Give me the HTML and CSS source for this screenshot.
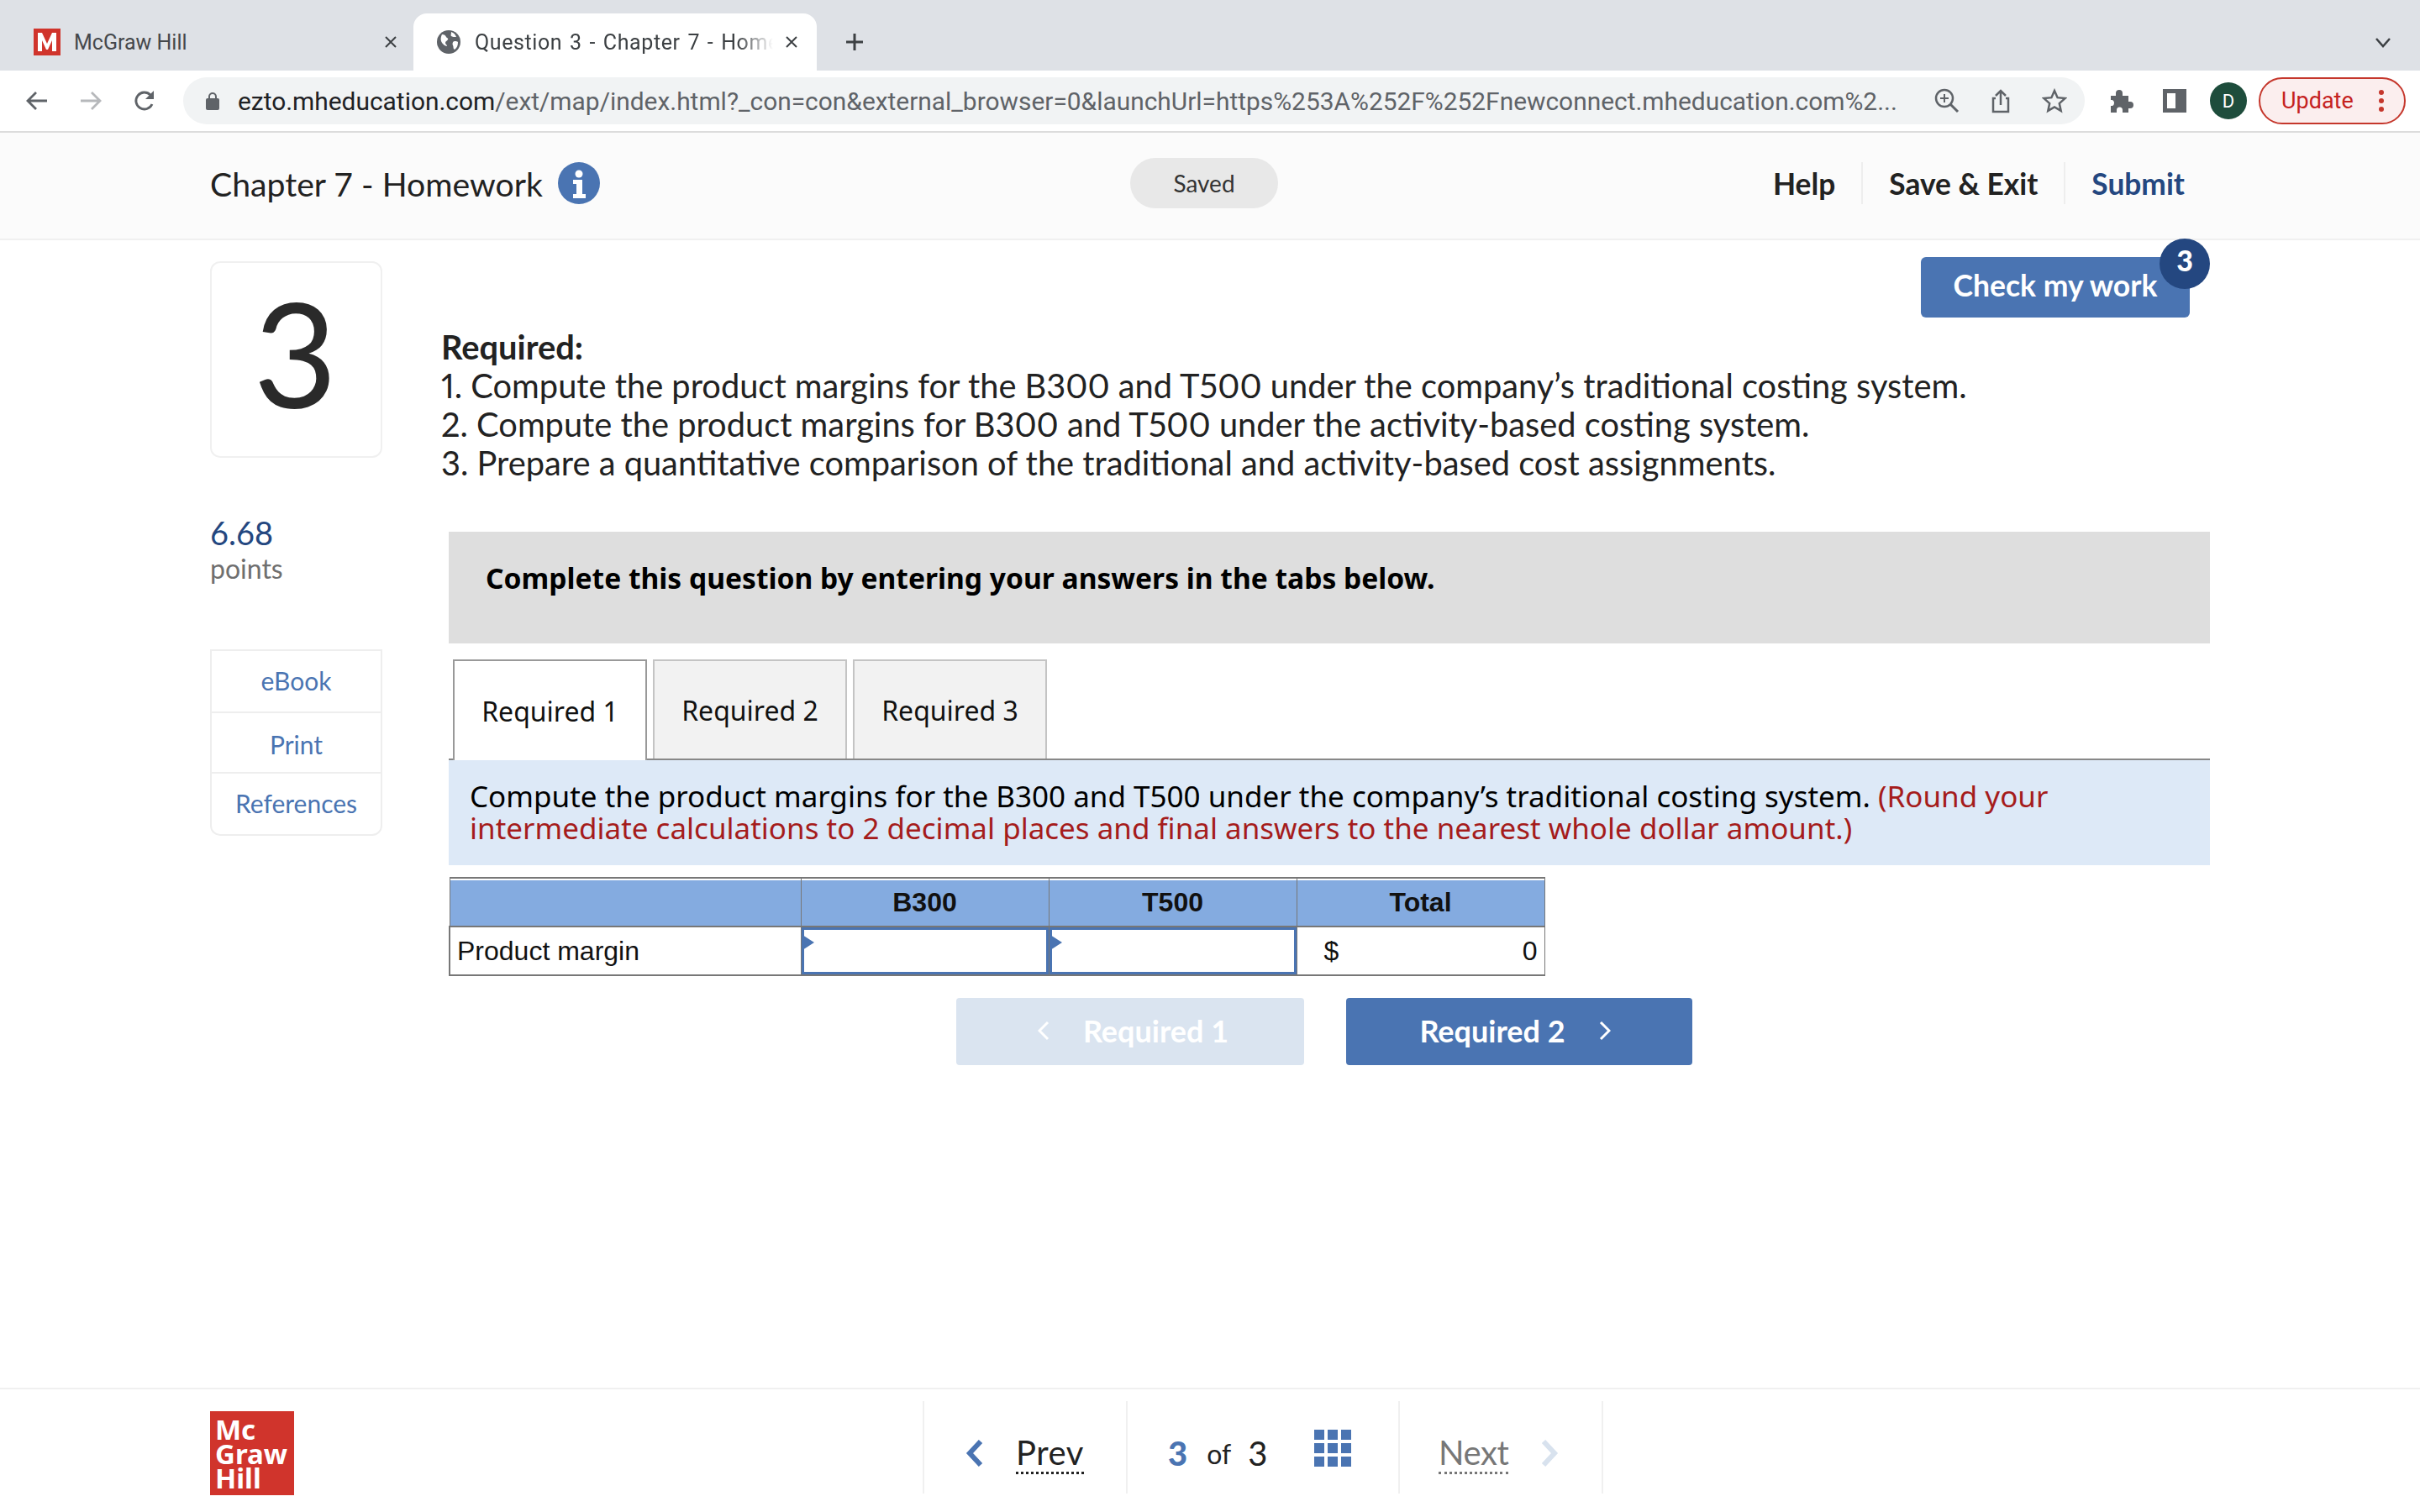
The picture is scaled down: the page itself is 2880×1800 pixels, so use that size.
FILE: index.html
```html
<!DOCTYPE html>
<html lang="en">
<head>
<meta charset="utf-8">
<title>Question 3 - Chapter 7 - Homework</title>
<link rel="stylesheet" href="styles.css">
</head>
<body>
<div class="tabstrip">
  <div class="btab">
    <svg class="fav" viewBox="0 0 32 32"><rect width="32" height="32" fill="#d0342c"/><path d="M5 27V5h5l6 13 6-13h5v22h-5V14l-5 11h-2L10 14v13z" fill="#fff"/></svg>
    <span class="btab-title">McGraw Hill</span>
    <svg class="tabx" viewBox="0 0 16 16"><path d="M2 2l12 12M14 2L2 14" stroke="#3c4043" stroke-width="2" fill="none"/></svg>
  </div>
  <div class="btab active">
    <svg class="globe" viewBox="0 0 28 28"><circle cx="14" cy="14" r="14" fill="#5f6368"/><path d="M6 5c3 0 4 1 5 3s3 1 2 3-3 2-3 4 2 2 2 4c-2 0-6-3-7-6-1-3 0-6 1-8zM17 2c0 3-1 4 0 5s4 1 6 1c-1-3-3-5-6-6zM21 13c2 0 3 0 4 1 0 4-1 7-4 9-2-1-1-3-2-5s0-5 2-5z" fill="#fff"/></svg>
    <span class="btab-title fade">Question 3 - Chapter 7 - Homework</span>
    <svg class="tabx" viewBox="0 0 16 16"><path d="M2 2l12 12M14 2L2 14" stroke="#3c4043" stroke-width="2" fill="none"/></svg>
  </div>
  <svg class="newtab" viewBox="0 0 24 24"><path d="M12 2v20M2 12h20" stroke="#3c4043" stroke-width="3" fill="none"/></svg>
  <svg class="tabmenu" viewBox="0 0 20 20"><path d="M2 6l8 9 8-9" stroke="#3c4043" stroke-width="2.5" fill="none"/></svg>
</div>

<div class="toolbar">
  <svg class="navicon" viewBox="0 0 28 28"><path d="M26 14H4M13 4L3 14l10 10" stroke="#5f6368" stroke-width="2.8" fill="none"/></svg>
  <svg class="navicon" viewBox="0 0 28 28"><path d="M2 14h22M15 4l10 10-10 10" stroke="#b6b8bb" stroke-width="2.8" fill="none"/></svg>
  <svg class="navicon" viewBox="0 0 28 28"><path d="M23 18a10 10 0 1 1-2-11l3 3" stroke="#5f6368" stroke-width="2.8" fill="none"/><path d="M25 2v10H15z" fill="#5f6368"/></svg>
  <div class="omnibox">
    <svg class="lock" viewBox="0 0 16 22"><path d="M4 9V6a4 4 0 0 1 8 0v3" stroke="#5f6368" stroke-width="2" fill="none"/><rect y="8" width="16" height="14" rx="2" fill="#5f6368"/></svg>
    <span class="url"><b>ezto.mheducation.com</b>/ext/map/index.html?_con=con&amp;external_browser=0&amp;launchUrl=https%253A%252F%252Fnewconnect.mheducation.com%2...</span>
    <svg class="omni-icon" viewBox="0 0 30 30"><circle cx="12" cy="12" r="10" stroke="#5f6368" stroke-width="2.5" fill="none"/><path d="M12 7v10M7 12h10" stroke="#5f6368" stroke-width="2"/><path d="M19 19l9 9" stroke="#5f6368" stroke-width="3"/></svg>
    <svg class="omni-icon" viewBox="0 0 30 30"><path d="M9 12H6v16h18V12h-3" stroke="#5f6368" stroke-width="2.5" fill="none"/><path d="M15 20V3M9 9l6-6 6 6" stroke="#5f6368" stroke-width="2.5" fill="none"/></svg>
    <svg class="omni-icon" viewBox="0 0 30 30"><path d="M15 3l3.6 8.2 8.9.9-6.700 6 1.900 8.800L15 22.400 7.300 26.900l1.900-8.800-6.700-6 8.900-.9z" stroke="#5f6368" stroke-width="2.500" fill="none"/></svg>
  </div>
  <svg class="ext" viewBox="0 0 30 30"><path d="M3 9h6V6a4 4 0 0 1 8 0v3h7v7h2a4 4 0 0 1 0 8h-2v5H17v-3a3.500 3.500 0 0 0-7 0v3H3v-8h2a4 4 0 0 0 0-7H3z" fill="#5f6368"/></svg>
  <svg class="panel" viewBox="0 0 28 28"><path d="M0 0h28v28H0zM5 5v18h10V5z" fill="#5f6368" fill-rule="evenodd"/></svg>
  <span class="avatar">D</span>
  <div class="update"><span>Update</span><svg class="dots" viewBox="0 0 6 26"><circle cx="3" cy="3" r="3" fill="#c5372c"/><circle cx="3" cy="13" r="3" fill="#c5372c"/><circle cx="3" cy="23" r="3" fill="#c5372c"/></svg></div>
</div>

<header class="apphead">
  <div class="apptitle">
    <span>Chapter 7 - Homework</span>
    <svg class="info" viewBox="0 0 50 50"><circle cx="25" cy="25" r="25" fill="#4a74b2"/><circle cx="25" cy="14" r="4.500" fill="#fff"/><path d="M18 21h11v17h4v5H18v-5h4V26h-4z" fill="#fff"/></svg>
  </div>
  <div class="saved">Saved</div>
  <nav class="appnav">
    <a class="first">Help</a>
    <a>Save &amp; Exit</a>
    <a class="submit">Submit</a>
  </nav>
</header>

<main class="main">
  <aside class="side">
    <div class="qnum"><span>3</span></div>
    <div class="pts">6.68</div>
    <div class="ptslabel">points</div>
    <ul class="links">
      <li class="l1">eBook</li>
      <li class="l2">Print</li>
      <li class="l3">References</li>
    </ul>
  </aside>
  <section class="content">
    <div class="checkrow">
      <button class="check"><span class="checktext">Check my work</span><span class="badge">3</span></button>
    </div>
    <div class="req">
      <strong>Required:</strong><br>
      1. Compute the product margins for the B300 and T500 under the company’s traditional costing system.<br>
      2. Compute the product margins for B300 and T500 under the activity-based costing system.<br>
      3. Prepare a quantitative comparison of the traditional and activity-based cost assignments.
    </div>
    <div class="panelwrap">
      <div class="instr">Complete this question by entering your answers in the tabs below.</div>
      <div class="qtabs">
        <div class="qtab on">Required 1</div>
        <div class="qtab">Required 2</div>
        <div class="qtab">Required 3</div>
      </div>
      <div class="prompt">Compute the product margins for the B300 and T500 under the company’s traditional costing system. <span class="red">(Round your intermediate calculations to 2 decimal places and final answers to the nearest whole dollar amount.)</span></div>
      <table class="sheet">
        <colgroup><col class="c1"><col class="c2"><col class="c2"><col class="c2"></colgroup>
        <thead><tr><th></th><th>B300</th><th>T500</th><th>Total</th></tr></thead>
        <tbody><tr>
          <td class="lbl">Product margin</td>
          <td class="inp"><div class="box"></div></td>
          <td class="inp"><div class="box"></div></td>
          <td class="tot"><span>$</span><span>0</span></td>
        </tr></tbody>
      </table>
      <div class="pager">
        <button class="pbtn dim"><svg class="chev" viewBox="0 0 14 24"><path d="M12 2L2 12l10 10" stroke="#fff" stroke-width="3" fill="none"/></svg>Required 1</button>
        <button class="pbtn nextbtn"><span>Required 2</span><svg class="chev" viewBox="0 0 14 24"><path d="M2 2l10 10L2 22" stroke="#fff" stroke-width="3" fill="none"/></svg></button>
      </div>
    </div>
  </section>
</main>

<footer class="foot">
  <div class="logo">Mc<br>Graw<br>Hill</div>
  <div class="fnav">
    <div class="fseg sprev"><svg class="fchev" viewBox="0 0 24 36"><path d="M19 4L6 18l13 14" stroke="#4a74b2" stroke-width="6" fill="none"/></svg><span class="flink">Prev</span></div>
    <div class="fseg scount"><b class="cur">3</b><span class="of">of</span><span class="tot3">3</span>
      <svg class="grid" viewBox="0 0 44 44"><path d="M0 0h12v12H0zM16 0h12v12H16zM32 0h12v12H32zM0 16h12v12H0zM16 16h12v12H16zM32 16h12v12H32zM0 32h12v12H0zM16 32h12v12H16zM32 32h12v12H32z" fill="#4a74b2"/></svg>
    </div>
    <div class="fseg snext"><span class="flink off">Next</span><svg class="fchev" viewBox="0 0 24 36"><path d="M5 4l13 14L5 32" stroke="#d8e2ee" stroke-width="6" fill="none"/></svg></div>
  </div>
</footer>
</body>
</html>
```
FILE: styles.css
```css
* { box-sizing: border-box; }
html, body { margin: 0; padding: 0; }
body { width: 2880px; height: 1800px; overflow: hidden; display: flex; flex-direction: column; background: #fff; font-family: Lato, "Liberation Sans", sans-serif; color: #222; }

.tabstrip { height: 84px; flex: none; background: #dee1e6; display: flex; align-items: flex-end; padding-left: 16px; position: relative; }
.btab { width: 478px; height: 68px; display: flex; align-items: center; padding: 0 21px 0 24px; color: #45484c; font: 25px Roboto, "Liberation Sans", sans-serif; }
.btab.active { width: 480px; background: #fff; border-radius: 16px 16px 0 0; color: #3c4043; padding: 0 22px 0 28px; margin-left: -2px; }
.fav { width: 32px; height: 32px; margin-right: 16px; flex: none; }
.globe { width: 28px; height: 28px; margin-right: 17px; flex: none; }
.btab-title { flex: 1; white-space: nowrap; overflow: hidden; }
.btab-title.fade { letter-spacing: .6px; word-spacing: 2px; -webkit-mask-image: linear-gradient(to right, #000 88%, transparent 100%); mask-image: linear-gradient(to right, #000 88%, transparent 100%); }
.tabx { width: 16px; height: 16px; flex: none; margin-left: 14px; }
.newtab { width: 24px; height: 24px; margin: 0 0 22px 33px; flex: none; }
.tabmenu { width: 20px; height: 20px; position: absolute; right: 34px; top: 40px; }

.toolbar { height: 74px; flex: none; background: #fff; border-bottom: 2px solid #dcdcdc; display: flex; align-items: center; padding: 0 17px 0 30px; }
.navicon { width: 28px; height: 28px; flex: none; margin-right: 36px; }
.navicon:nth-child(3) { margin-right: 0; margin-left: 0; }
.omnibox { width: 2263px; height: 56px; margin-left: 32px; flex: none; border-radius: 28px; background: #f1f3f4; display: flex; align-items: center; padding-left: 27px; }
.lock { width: 16px; height: 22px; flex: none; margin-right: 22px; }
.url { font: 29.900px Roboto, "Liberation Sans", sans-serif; color: #5f6368; white-space: nowrap; width: 1976px; flex: none; margin-right: 43px; }
.url b { font-weight: 400; color: #202124; }
.omni-icon { width: 30px; height: 30px; flex: none; margin-right: 34px; }
.omni-icon:last-child { margin-right: 0; }
.ext { width: 30px; height: 30px; flex: none; margin-left: 28px; }
.panel { width: 28px; height: 28px; flex: none; margin-left: 35px; }
.avatar { width: 44px; height: 44px; border-radius: 50%; background: #1e4d3c; color: #fff; display: flex; align-items: center; justify-content: center; font: 22px Roboto, sans-serif; margin-left: 28px; flex: none; }
.update { width: 175px; height: 56px; margin-left: 14px; flex: none; border: 2px solid #c5372c; border-radius: 28px; background: #fbeeee; color: #c5221f; font: 27px Roboto, sans-serif; display: flex; align-items: center; padding-left: 25px; }
.dots { width: 6px; height: 26px; margin-left: 30px; }

.apphead { height: 128px; flex: none; background: #fbfbfb; border-bottom: 2px solid #f0f0f0; display: grid; grid-template-columns: 1fr auto 1fr; align-items: center; padding: 0 264px 6px 250px; }
.apptitle { display: flex; align-items: center; font-size: 39.200px; gap: 18px; color: #222; }
.info { width: 50px; height: 50px; flex: none; }
.saved { width: 176px; height: 60px; border-radius: 30px; background: #e8e8e8; display: flex; align-items: center; justify-content: center; font-size: 28px; color: #333; }
.appnav { display: flex; justify-content: flex-end; font-size: 35.300px; font-weight: 700; }
.appnav a { height: 50px; display: flex; align-items: center; padding: 0 31px; border-left: 2px solid #eee; }
.appnav a.first { border-left: 0; }
.appnav a.submit { color: #244780; padding-right: 16px; }

.main { flex: 1; display: flex; padding-left: 250px; min-height: 0; }
.side { width: 205px; flex: none; padding-top: 25px; }
.qnum { height: 234px; border: 2px solid #f0f0f0; border-radius: 12px; display: flex; align-items: center; justify-content: center; font-size: 172px; line-height: 1; color: #2a2a2a; padding: 0 2px 16px 0; }
.pts { margin-top: 66px; font-size: 38px; line-height: 46px; color: #244780; }
.ptslabel { font-size: 32px; line-height: 40px; color: #6f6f6f; }
.links { list-style: none; margin: 76px 0 0; padding: 0; border: 2px solid #eee; border-radius: 0 0 12px 12px; font-size: 30px; color: #4a74b2; text-align: center; }
.links li { display: flex; align-items: center; justify-content: center; }
.l1 { height: 74px; border-bottom: 2px solid #eee; padding-bottom: 2px; }
.l2 { height: 72px; border-bottom: 2px solid #eee; padding-top: 4px; }
.l3 { height: 72px; padding-bottom: 2px; }

.content { width: 2105px; margin-left: 70px; flex: none; }
.checkrow { display: flex; justify-content: flex-end; padding: 20px 24px 0 0; }
.check { position: relative; width: 320px; height: 72px; border: 0; border-radius: 6px; background: #4a74b2; color: #fff; font: 700 35.500px Lato, sans-serif; padding: 0 0 6px; }
.badge { position: absolute; right: -24px; top: -22px; width: 60px; height: 60px; border-radius: 50%; background: #244780; display: flex; align-items: center; justify-content: center; font-size: 34px; font-weight: 900; padding-bottom: 10px; }
.req { margin-top: 12px; font-size: 39.800px; line-height: 46px; color: #222; font-variant-numeric: proportional-nums; }
.panelwrap { margin-left: 9px; margin-top: 59px; }
.instr { height: 133px; background: #dedede; padding: 33px 44px 0; font: 700 33.600px/44px "Noto Sans", sans-serif; color: #000; }
.qtabs { display: flex; gap: 7px; margin-top: 19px; padding-left: 5px; border-bottom: 2px solid #888; height: 120px; }
.qtab { width: 231px; height: 118px; border: 2px solid #c4c4c4; border-bottom: 0; background: #f2f2f2; display: flex; align-items: center; justify-content: center; font: 32px "Noto Sans", sans-serif; color: #111; }
.qtab.on { height: 120px; background: #fff; border-color: #999; position: relative; }
.prompt { height: 125px; background: #dde9f7; padding: 24px 25px 0; font: 35px/38px "Noto Sans", sans-serif; color: #000; }
.red { color: #a51c1c; }
.sheet { margin-top: 14px; width: 1303px; border-collapse: collapse; table-layout: fixed; font: 32px "Liberation Sans", sans-serif; color: #111; border-top: 2px solid #777; }
.c1 { width: 418px; }
.c2 { width: 295px; }
.sheet th { height: 58px; background: #84abe0; border: 1px solid #777; border-top: 0; border-bottom: 2px solid #777; padding: 0; font-weight: 700; box-shadow: inset 0 2px 0 #fff; }
.sheet td { height: 58px; border: 1px solid #777; border-bottom: 2px solid #777; padding: 0; }
.lbl { padding-left: 8px !important; border-left: 2px solid #777 !important; }
.inp { position: relative; }
.box { height: 56px; border: 3px solid #4a74b2; background: #fff; position: relative; }
.box::before { content: ""; position: absolute; left: -2px; top: 6px; border-left: 14px solid #4a74b2; border-top: 9px solid transparent; border-bottom: 9px solid transparent; }
.tot span:first-child { float: left; margin-left: 32px; }
.tot span:last-child { float: right; margin-right: 8px; }
.pager { display: flex; gap: 50px; margin: 26px 0 0 604px; }
.pbtn { width: 412px; height: 80px; border: 0; border-radius: 4px; background: #4a74b2; color: #fff; font: 700 36px Lato, sans-serif; display: flex; align-items: center; justify-content: center; gap: 40px; padding-bottom: 2px; }
.pbtn.nextbtn { padding: 0 10px 2px 0; }
.pbtn.dim { width: 414px; background: #dae4f0; padding: 0 0 2px 7px; }
.chev { width: 14px; height: 24px; flex: none; }

.foot { height: 148px; flex: none; border-top: 2px solid #f0f0f0; display: flex; padding-left: 250px; }
.logo { width: 100px; height: 100px; margin-top: 26px; flex: none; background: #d0342c; color: #fff; font: 700 33px/29px "Noto Sans", "DejaVu Sans", sans-serif; padding: 7px 0 0 6px; }
.fnav { margin: 14px 0 0 748px; display: flex; height: 110px; border-right: 2px solid #f0f0f0; }
.fseg { display: flex; align-items: center; border-left: 2px solid #f0f0f0; padding-top: 14px; }
.sprev { width: 242px; padding-left: 48px; gap: 37px; }
.scount { width: 324px; padding-left: 48px; font-size: 40px; }
.snext { width: 242px; padding-left: 46px; gap: 37px; }
.fchev { width: 24px; height: 36px; flex: none; }
.flink { font-size: 40px; line-height: 46px; border-bottom: 3px dotted #222; color: #222; letter-spacing: .6px; }
.flink.off { color: #777; border-color: #777; letter-spacing: -.4px; }
.cur { color: #4a74b2; font-weight: 900; }
.of { font-size: 32px; margin: 0 20px 0 23px; }
.grid { width: 44px; height: 44px; margin: -12px 0 0 56px; flex: none; }
```
